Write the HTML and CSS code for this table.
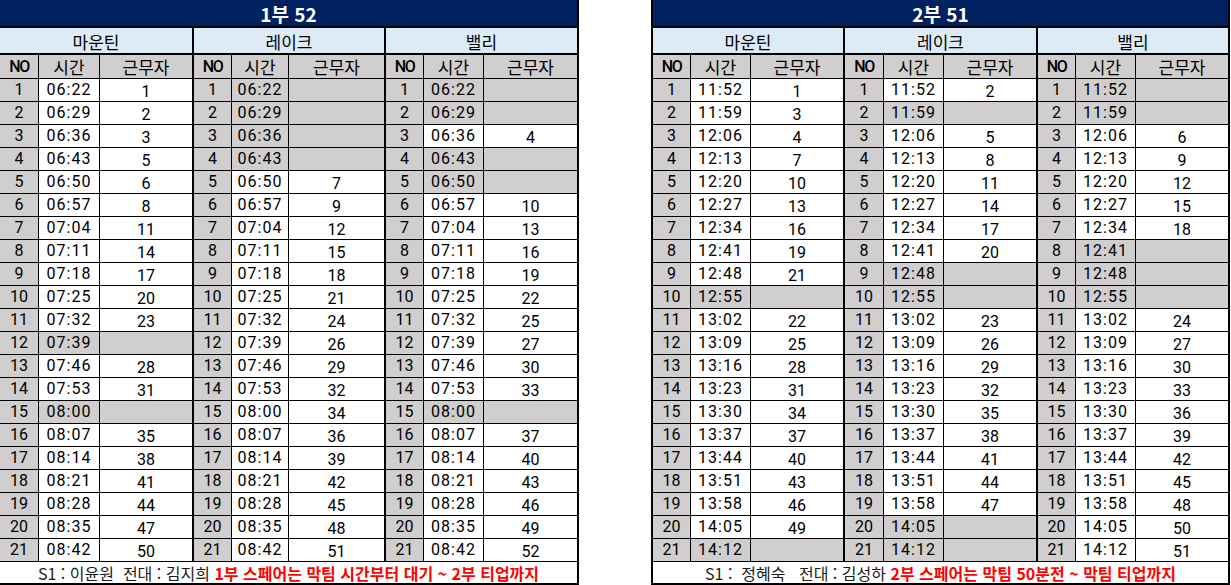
FILE: index.html
```html
<!DOCTYPE html>
<html lang="ko">
<head>
<meta charset="utf-8">
<title>근무 배정표</title>
<link rel="stylesheet" href="styles.css">
</head>
<body>
<div class="page">
  <div class="sheet s1">
    <span class="title">1부 52</span>
    <span class="grp">마운틴</span><span class="grp">레이크</span><span class="grp">밸리</span>
    <span class="h hn">NO</span><span class="h">시간</span><span class="h hw">근무자</span>
    <span class="h hn">NO</span><span class="h">시간</span><span class="h hw">근무자</span>
    <span class="h hn">NO</span><span class="h">시간</span><span class="h hw">근무자</span>

    <span class="n">1</span><span class="t">06:22</span><span class="w">1</span>
    <span class="n">1</span><span class="t g">06:22</span><span class="w g"></span>
    <span class="n">1</span><span class="t g">06:22</span><span class="w g"></span>

    <span class="n">2</span><span class="t">06:29</span><span class="w">2</span>
    <span class="n">2</span><span class="t g">06:29</span><span class="w g"></span>
    <span class="n">2</span><span class="t g">06:29</span><span class="w g"></span>

    <span class="n">3</span><span class="t">06:36</span><span class="w">3</span>
    <span class="n">3</span><span class="t g">06:36</span><span class="w g"></span>
    <span class="n">3</span><span class="t">06:36</span><span class="w">4</span>

    <span class="n">4</span><span class="t">06:43</span><span class="w">5</span>
    <span class="n">4</span><span class="t g">06:43</span><span class="w g"></span>
    <span class="n">4</span><span class="t g">06:43</span><span class="w g"></span>

    <span class="n">5</span><span class="t">06:50</span><span class="w">6</span>
    <span class="n">5</span><span class="t">06:50</span><span class="w">7</span>
    <span class="n">5</span><span class="t g">06:50</span><span class="w g"></span>

    <span class="n">6</span><span class="t">06:57</span><span class="w">8</span>
    <span class="n">6</span><span class="t">06:57</span><span class="w">9</span>
    <span class="n">6</span><span class="t">06:57</span><span class="w">10</span>

    <span class="n">7</span><span class="t">07:04</span><span class="w">11</span>
    <span class="n">7</span><span class="t">07:04</span><span class="w">12</span>
    <span class="n">7</span><span class="t">07:04</span><span class="w">13</span>

    <span class="n">8</span><span class="t">07:11</span><span class="w">14</span>
    <span class="n">8</span><span class="t">07:11</span><span class="w">15</span>
    <span class="n">8</span><span class="t">07:11</span><span class="w">16</span>

    <span class="n">9</span><span class="t">07:18</span><span class="w">17</span>
    <span class="n">9</span><span class="t">07:18</span><span class="w">18</span>
    <span class="n">9</span><span class="t">07:18</span><span class="w">19</span>

    <span class="n">10</span><span class="t">07:25</span><span class="w">20</span>
    <span class="n">10</span><span class="t">07:25</span><span class="w">21</span>
    <span class="n">10</span><span class="t">07:25</span><span class="w">22</span>

    <span class="n">11</span><span class="t">07:32</span><span class="w">23</span>
    <span class="n">11</span><span class="t">07:32</span><span class="w">24</span>
    <span class="n">11</span><span class="t">07:32</span><span class="w">25</span>

    <span class="n">12</span><span class="t g">07:39</span><span class="w g"></span>
    <span class="n">12</span><span class="t">07:39</span><span class="w">26</span>
    <span class="n">12</span><span class="t">07:39</span><span class="w">27</span>

    <span class="n">13</span><span class="t">07:46</span><span class="w">28</span>
    <span class="n">13</span><span class="t">07:46</span><span class="w">29</span>
    <span class="n">13</span><span class="t">07:46</span><span class="w">30</span>

    <span class="n">14</span><span class="t">07:53</span><span class="w">31</span>
    <span class="n">14</span><span class="t">07:53</span><span class="w">32</span>
    <span class="n">14</span><span class="t">07:53</span><span class="w">33</span>

    <span class="n">15</span><span class="t g">08:00</span><span class="w g"></span>
    <span class="n">15</span><span class="t">08:00</span><span class="w">34</span>
    <span class="n">15</span><span class="t g">08:00</span><span class="w g"></span>

    <span class="n">16</span><span class="t">08:07</span><span class="w">35</span>
    <span class="n">16</span><span class="t">08:07</span><span class="w">36</span>
    <span class="n">16</span><span class="t">08:07</span><span class="w">37</span>

    <span class="n">17</span><span class="t">08:14</span><span class="w">38</span>
    <span class="n">17</span><span class="t">08:14</span><span class="w">39</span>
    <span class="n">17</span><span class="t">08:14</span><span class="w">40</span>

    <span class="n">18</span><span class="t">08:21</span><span class="w">41</span>
    <span class="n">18</span><span class="t">08:21</span><span class="w">42</span>
    <span class="n">18</span><span class="t">08:21</span><span class="w">43</span>

    <span class="n">19</span><span class="t">08:28</span><span class="w">44</span>
    <span class="n">19</span><span class="t">08:28</span><span class="w">45</span>
    <span class="n">19</span><span class="t">08:28</span><span class="w">46</span>

    <span class="n">20</span><span class="t">08:35</span><span class="w">47</span>
    <span class="n">20</span><span class="t">08:35</span><span class="w">48</span>
    <span class="n">20</span><span class="t">08:35</span><span class="w">49</span>

    <span class="n">21</span><span class="t">08:42</span><span class="w">50</span>
    <span class="n">21</span><span class="t">08:42</span><span class="w">51</span>
    <span class="n">21</span><span class="t">08:42</span><span class="w">52</span>

    <span class="foot">S1 : 이윤원  전대 : 김지희 <b class="red">1부 스페어는 막팀 시간부터 대기 ~ 2부 티업까지</b></span>
  </div>

  <div class="sheet s2">
    <span class="title">2부 51</span>
    <span class="grp">마운틴</span><span class="grp">레이크</span><span class="grp">밸리</span>
    <span class="h hn">NO</span><span class="h">시간</span><span class="h hw">근무자</span>
    <span class="h hn">NO</span><span class="h">시간</span><span class="h hw">근무자</span>
    <span class="h hn">NO</span><span class="h">시간</span><span class="h hw">근무자</span>

    <span class="n">1</span><span class="t">11:52</span><span class="w">1</span>
    <span class="n">1</span><span class="t">11:52</span><span class="w">2</span>
    <span class="n">1</span><span class="t g">11:52</span><span class="w g"></span>

    <span class="n">2</span><span class="t">11:59</span><span class="w">3</span>
    <span class="n">2</span><span class="t g">11:59</span><span class="w g"></span>
    <span class="n">2</span><span class="t g">11:59</span><span class="w g"></span>

    <span class="n">3</span><span class="t">12:06</span><span class="w">4</span>
    <span class="n">3</span><span class="t">12:06</span><span class="w">5</span>
    <span class="n">3</span><span class="t">12:06</span><span class="w">6</span>

    <span class="n">4</span><span class="t">12:13</span><span class="w">7</span>
    <span class="n">4</span><span class="t">12:13</span><span class="w">8</span>
    <span class="n">4</span><span class="t">12:13</span><span class="w">9</span>

    <span class="n">5</span><span class="t">12:20</span><span class="w">10</span>
    <span class="n">5</span><span class="t">12:20</span><span class="w">11</span>
    <span class="n">5</span><span class="t">12:20</span><span class="w">12</span>

    <span class="n">6</span><span class="t">12:27</span><span class="w">13</span>
    <span class="n">6</span><span class="t">12:27</span><span class="w">14</span>
    <span class="n">6</span><span class="t">12:27</span><span class="w">15</span>

    <span class="n">7</span><span class="t">12:34</span><span class="w">16</span>
    <span class="n">7</span><span class="t">12:34</span><span class="w">17</span>
    <span class="n">7</span><span class="t">12:34</span><span class="w">18</span>

    <span class="n">8</span><span class="t">12:41</span><span class="w">19</span>
    <span class="n">8</span><span class="t">12:41</span><span class="w">20</span>
    <span class="n">8</span><span class="t g">12:41</span><span class="w g"></span>

    <span class="n">9</span><span class="t">12:48</span><span class="w">21</span>
    <span class="n">9</span><span class="t g">12:48</span><span class="w g"></span>
    <span class="n">9</span><span class="t g">12:48</span><span class="w g"></span>

    <span class="n">10</span><span class="t g">12:55</span><span class="w g"></span>
    <span class="n">10</span><span class="t g">12:55</span><span class="w g"></span>
    <span class="n">10</span><span class="t g">12:55</span><span class="w g"></span>

    <span class="n">11</span><span class="t">13:02</span><span class="w">22</span>
    <span class="n">11</span><span class="t">13:02</span><span class="w">23</span>
    <span class="n">11</span><span class="t">13:02</span><span class="w">24</span>

    <span class="n">12</span><span class="t">13:09</span><span class="w">25</span>
    <span class="n">12</span><span class="t">13:09</span><span class="w">26</span>
    <span class="n">12</span><span class="t">13:09</span><span class="w">27</span>

    <span class="n">13</span><span class="t">13:16</span><span class="w">28</span>
    <span class="n">13</span><span class="t">13:16</span><span class="w">29</span>
    <span class="n">13</span><span class="t">13:16</span><span class="w">30</span>

    <span class="n">14</span><span class="t">13:23</span><span class="w">31</span>
    <span class="n">14</span><span class="t">13:23</span><span class="w">32</span>
    <span class="n">14</span><span class="t">13:23</span><span class="w">33</span>

    <span class="n">15</span><span class="t">13:30</span><span class="w">34</span>
    <span class="n">15</span><span class="t">13:30</span><span class="w">35</span>
    <span class="n">15</span><span class="t">13:30</span><span class="w">36</span>

    <span class="n">16</span><span class="t">13:37</span><span class="w">37</span>
    <span class="n">16</span><span class="t">13:37</span><span class="w">38</span>
    <span class="n">16</span><span class="t">13:37</span><span class="w">39</span>

    <span class="n">17</span><span class="t">13:44</span><span class="w">40</span>
    <span class="n">17</span><span class="t">13:44</span><span class="w">41</span>
    <span class="n">17</span><span class="t">13:44</span><span class="w">42</span>

    <span class="n">18</span><span class="t">13:51</span><span class="w">43</span>
    <span class="n">18</span><span class="t">13:51</span><span class="w">44</span>
    <span class="n">18</span><span class="t">13:51</span><span class="w">45</span>

    <span class="n">19</span><span class="t">13:58</span><span class="w">46</span>
    <span class="n">19</span><span class="t">13:58</span><span class="w">47</span>
    <span class="n">19</span><span class="t">13:58</span><span class="w">48</span>

    <span class="n">20</span><span class="t">14:05</span><span class="w">49</span>
    <span class="n">20</span><span class="t g">14:05</span><span class="w g"></span>
    <span class="n">20</span><span class="t">14:05</span><span class="w">50</span>

    <span class="n">21</span><span class="t g">14:12</span><span class="w g"></span>
    <span class="n">21</span><span class="t g">14:12</span><span class="w g"></span>
    <span class="n">21</span><span class="t">14:12</span><span class="w">51</span>

    <span class="foot">S1 :  정혜숙   전대 : 김성하 <b class="red">2부 스페어는 막팀 50분전 ~ 막팀 티업까지</b></span>
  </div>
</div>
</body>
</html>
```
FILE: styles.css
```css
* {
  box-sizing: border-box;
  margin: 0;
  padding: 0;
}

html, body {
  background: #fff;
}

body {
  margin: 0;
  font-family: "Noto Sans CJK KR", "Liberation Sans", sans-serif;
  color: #000;
}

.page {
  display: flex;
  gap: 72px;
  width: 1231px;
  height: 585px;
  overflow: hidden;
}

.sheet {
  display: grid;
  grid-template-rows: 28px 27px 24px repeat(21, 23px) 21px;
  height: 585px;
  border-bottom: 2px solid #000;
}

.s1 {
  width: 579px;
  grid-template-columns: 39px 61px 94px 38px 57px 97px 38px 60px 95px;
}

.s2 {
  width: 579px;
  border-left: 2px solid #000;
  grid-template-columns: 38px 60px 94px 39px 60px 94px 38px 60px 94px;
}

.sheet > * {
  display: flex;
  align-items: center;
  justify-content: center;
  border-right: 1px solid #000;
  border-bottom: 1px solid #000;
  background: #fff;
  font-size: 16px;
  line-height: 1;
  white-space: nowrap;
  overflow: hidden;
}

.title {
  grid-column: 1 / -1;
  background: #002060;
  color: #fff;
  font-weight: 700;
  font-size: 19px;
  border-bottom-width: 2px;
  border-right-width: 2px;
  padding-top: 1px;
}

.grp {
  grid-column: span 3;
  background: #ddebf7;
  font-size: 17px;
  border-bottom-width: 2px;
  border-right-width: 2px;
  padding-top: 1px;
}

.h {
  background: #d0cece;
  font-size: 17px;
}

.hn {
  font-family: "Roboto", sans-serif;
  font-size: 16px;
  letter-spacing: -1.5px;
  font-weight: 500;
}

.hw {
  border-right-width: 2px;
}

.n {
  background: #d0cece;
  font-family: "Roboto", sans-serif;
  font-size: 16px;
}

.t {
  font-family: "Roboto", sans-serif;
  font-size: 16px;
  letter-spacing: 1px;
}

.w {
  border-right-width: 2px;
  font-family: "Roboto", sans-serif;
  font-size: 16px;
  padding-top: 3px;
}

.g {
  background: #d0cece;
}

.foot {
  grid-column: 1 / -1;
  border-bottom: none;
  border-right-width: 2px;
  font-size: 16px;
  white-space: pre;
  color: #1a1a1a;
}

.red {
  color: #ff0000;
  font-weight: 700;
}
```
